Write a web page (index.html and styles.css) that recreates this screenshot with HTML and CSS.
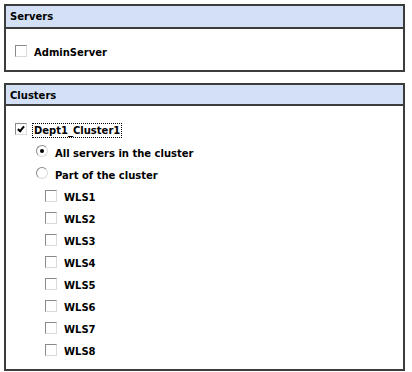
FILE: index.html
```html
<!DOCTYPE html>
<html lang="en">
<head>
  <meta charset="UTF-8" />
  <title>Targets</title>
  <link rel="stylesheet" href="styles.css">
</head>
<body>

  <div class="panel servers">
    <div class="panel-head">Servers</div>
    <div class="panel-body">
      <label class="row"><span class="check"></span>AdminServer</label>
    </div>
  </div>

  <div class="panel clusters">
    <div class="panel-head">Clusters</div>
    <div class="panel-body">
      <label class="row"><span class="check checked"></span><span class="focus">Dept1_Cluster1</span></label>
      <label class="row level1"><span class="radio selected"></span>All servers in the cluster</label>
      <label class="row level1"><span class="radio"></span>Part of the cluster</label>
      <label class="row level2"><span class="check"></span>WLS1</label>
      <label class="row level2"><span class="check"></span>WLS2</label>
      <label class="row level2"><span class="check"></span>WLS3</label>
      <label class="row level2"><span class="check"></span>WLS4</label>
      <label class="row level2"><span class="check"></span>WLS5</label>
      <label class="row level2"><span class="check"></span>WLS6</label>
      <label class="row level2"><span class="check"></span>WLS7</label>
      <label class="row level2"><span class="check"></span>WLS8</label>
    </div>
  </div>

</body>
</html>
```

FILE: styles.css
```css
body {
  margin: 0;
  padding: 4px 7px 0 4px;
  background: #fff;
  font-family: "DejaVu Sans", Verdana, sans-serif;
  font-size: 10px;
  font-weight: bold;
  color: #000;
}

.panel {
  border: 2px solid #3c3c3c;
  background: #fff;
}

.servers {
  margin-bottom: 11px;
}

.panel-head {
  height: 21px;
  line-height: 22px;
  padding-left: 4px;
  background: #d3e0f6;
  border-bottom: 2px solid #3c3c3c;
}

.clusters .panel-head {
  height: 19px;
  line-height: 21px;
}

.servers .panel-body {
  padding: 12px 0 7px 9px;
}

.clusters .panel-body {
  padding: 13px 0 7px 9px;
}

.row {
  display: flex;
  align-items: center;
  height: 22px;
}

.clusters .row:first-child {
  height: 23px;
}

.level1 {
  padding-left: 21px;
}

.level2 {
  padding-left: 30px;
}

.check {
  width: 10px;
  height: 10px;
  margin-right: 7px;
  margin-top: -3px;
  border: 1px solid;
  border-color: #8a8a8a #dadada #dadada #8a8a8a;
  background: #fff;
  position: relative;
}

.check.checked::after {
  content: "";
  position: absolute;
  left: 3px;
  top: 1px;
  width: 2px;
  height: 5px;
  border: solid #000;
  border-width: 0 2px 2px 0;
  transform: rotate(40deg);
}

.radio {
  width: 10px;
  height: 10px;
  margin-right: 7px;
  margin-top: -5px;
  border: 1px solid;
  border-color: #8a8a8a #dcdcdc #dcdcdc #8a8a8a;
  border-radius: 50%;
  background: #fff;
  position: relative;
}

.radio.selected::after {
  content: "";
  position: absolute;
  left: 3px;
  top: 3px;
  width: 4px;
  height: 4px;
  border-radius: 50%;
  background: #000;
}

.focus {
  outline: 1px dotted #000;
  padding: 1px 1px;
  margin-left: -1px;
}
```
